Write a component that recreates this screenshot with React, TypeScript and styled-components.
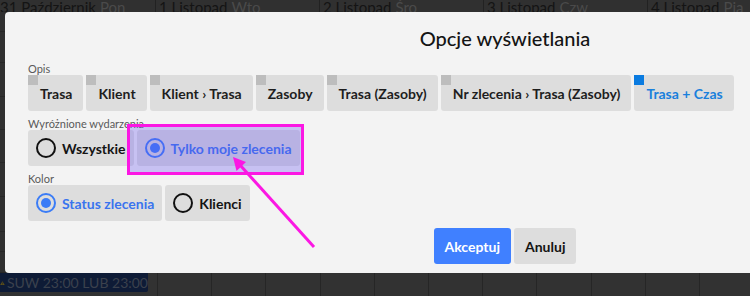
import styled, { createGlobalStyle } from 'styled-components';

const GlobalStyle = createGlobalStyle`
  html, body {
    margin: 0;
    padding: 0;
    width: 750px;
    height: 296px;
    overflow: hidden;
    background: #2f2f2f;
    font-family: Lato, 'Noto Sans', sans-serif;
  }
`;

const Page = styled.div`
  position: relative;
  width: 750px;
  height: 296px;
  overflow: hidden;
  display: flex;
  flex-direction: column;
`;

const DayHeader = styled.div`
  display: grid;
  grid-template-columns: 155px repeat(4, 164px) 1fr;
  height: 12px;
  overflow: hidden;
  background: #303030;
`;

const DayCell = styled.div`
  display: flex;
  align-items: flex-end;
  gap: 4px;
  padding-left: 3px;
  border-left: 1px solid #222;
  font-size: 15px;
  line-height: 14px;
  color: #141414;
  white-space: nowrap;

  &:first-child {
    border-left: none;
    padding-left: 0;
  }

  span {
    color: #4a4a4a;
  }
`;

const Timeline = styled.div`
  height: 261px;
  display: flex;
  flex-direction: column;
`;

const HourLine = styled.div<{ $h: number }>`
  height: ${(p) => p.$h}px;
  border-bottom: 1px solid #262626;
  box-sizing: border-box;
`;

const BottomRow = styled.div`
  flex: 1;
  display: grid;
  grid-template-columns: 157px repeat(11, 54.2px);
  background: #323232;
`;

const SlotCell = styled.div`
  border-left: 1px solid #262626;
  &:first-child {
    border-left: none;
  }
`;

const EventBar = styled.div`
  width: 148px;
  height: 19px;
  display: flex;
  align-items: center;
  gap: 2px;
  background: #0e1b36;
  color: #3b414d;
  font-size: 14px;
  white-space: nowrap;
  overflow: hidden;
  border-radius: 0 0 2px 0;
`;

const Modal = styled.div`
  position: absolute;
  left: 5px;
  top: 12px;
  width: 1000px;
  height: 261px;
  box-sizing: border-box;
  padding: 0 23px;
  background: #f3f3f3;
  border-radius: 4px;
  display: flex;
  flex-direction: column;
`;

const Title = styled.h2`
  margin: 14px 0 0;
  height: 36px;
  text-align: center;
  font-size: 20px;
  line-height: 24px;
  font-weight: 500;
  color: #141414;
`;

const Section = styled.div`
  display: flex;
  flex-direction: column;
  & + & {
    margin-top: 6px;
  }
`;

const Label = styled.div`
  height: 13px;
  font-size: 11px;
  line-height: 13px;
  color: #5a5a5a;
`;

const Row = styled.div`
  display: flex;
  gap: 3px;
`;

const OptionButton = styled.button<{ $active?: boolean }>`
  position: relative;
  height: 36px;
  padding: 0 11px 0 12px;
  border: none;
  border-radius: 3px;
  background: #dddddd;
  font-family: inherit;
  font-size: 14px;
  font-weight: 700;
  color: ${(p) => (p.$active ? '#1a80dc' : '#1e1e1e')};
  cursor: pointer;

  &::before {
    content: '';
    position: absolute;
    left: 0;
    top: 0;
    width: 10px;
    height: 10px;
    background: ${(p) => (p.$active ? '#0a7be0' : '#bdbdbd')};
  }
`;

const RadioButton = styled.button<{ $checked?: boolean }>`
  height: 36px;
  display: flex;
  align-items: center;
  gap: 6px;
  padding: 0 8px;
  border: none;
  border-radius: 3px;
  background: #dddddd;
  font-family: inherit;
  font-size: 14px;
  font-weight: 700;
  color: ${(p) => (p.$checked ? '#3a74ee' : '#141414')};
  cursor: pointer;
`;

const RadioDot = styled.span<{ $checked?: boolean }>`
  width: 20px;
  height: 20px;
  box-sizing: border-box;
  border-radius: 50%;
  border: 2px solid ${(p) => (p.$checked ? '#3b7cf6' : '#111')};
  display: flex;
  align-items: center;
  justify-content: center;

  &::after {
    content: '';
    display: ${(p) => (p.$checked ? 'block' : 'none')};
    width: 10px;
    height: 10px;
    border-radius: 50%;
    background: #3b7cf6;
  }
`;

const Footer = styled.div`
  margin-top: 7px;
  display: flex;
  justify-content: center;
  gap: 3px;
`;

const ActionButton = styled.button<{ $primary?: boolean }>`
  height: 36px;
  padding: 0 11px;
  border: none;
  border-radius: 3px;
  background: ${(p) => (p.$primary ? '#4080ff' : '#dddddd')};
  color: ${(p) => (p.$primary ? '#ffffff' : '#141414')};
  font-family: inherit;
  font-size: 14px;
  font-weight: 700;
  cursor: pointer;
`;

const Highlight = styled.div`
  position: absolute;
  left: 127px;
  top: 124px;
  width: 177px;
  height: 51px;
  box-sizing: border-box;
  border: 3px solid #fb17e3;
  background: rgba(100, 80, 243, 0.3);
  pointer-events: none;
`;

const ArrowLayer = styled.svg`
  position: absolute;
  left: 0;
  top: 0;
  pointer-events: none;
`;

const descOptions = [
  'Trasa',
  'Klient',
  'Klient › Trasa',
  'Zasoby',
  'Trasa (Zasoby)',
  'Nr zlecenia › Trasa (Zasoby)',
  'Trasa + Czas',
];

const days = [
  ['31 Październik', 'Pon'],
  ['1 Listopad', 'Wto'],
  ['2 Listopad', 'Śro'],
  ['3 Listopad', 'Czw'],
  ['4 Listopad', 'Pią'],
  ['', ''],
];

const hourRows = [20, 31, 34, 33, 33, 34, 35, 20, 21];

export default function App() {
  return (
    <>
      <GlobalStyle />
      <Page>
        <DayHeader>
          {days.map(([d, w], i) => (
            <DayCell key={i}>
              {d} <span>{w}</span>
            </DayCell>
          ))}
        </DayHeader>
        <Timeline>
          {hourRows.map((h, i) => (
            <HourLine key={i} $h={h} />
          ))}
        </Timeline>
        <BottomRow>
          <SlotCell>
            <EventBar>
              <svg width="16" height="14" viewBox="0 0 16 14">
                <path d="M8 1 L15.5 13.5 H0.5 Z" fill="#5e5018" />
                <rect x="7.2" y="5" width="1.6" height="5" fill="#0e1b36" />
                <rect x="7.2" y="11" width="1.6" height="1.6" fill="#0e1b36" />
              </svg>
              SUW 23:00 LUB 23:00
            </EventBar>
          </SlotCell>
          {Array.from({ length: 11 }).map((_, i) => (
            <SlotCell key={i} />
          ))}
        </BottomRow>

        <Modal>
          <Title>Opcje wyświetlania</Title>
          <Section>
            <Label>Opis</Label>
            <Row>
              {descOptions.map((o) => (
                <OptionButton key={o} $active={o === 'Trasa + Czas'}>
                  {o}
                </OptionButton>
              ))}
            </Row>
          </Section>
          <Section>
            <Label>Wyróżnione wydarzenia</Label>
            <Row>
              <RadioButton>
                <RadioDot />
                Wszystkie
              </RadioButton>
              <RadioButton $checked>
                <RadioDot $checked />
                Tylko moje zlecenia
              </RadioButton>
            </Row>
          </Section>
          <Section>
            <Label>Kolor</Label>
            <Row>
              <RadioButton $checked>
                <RadioDot $checked />
                Status zlecenia
              </RadioButton>
              <RadioButton>
                <RadioDot />
                Klienci
              </RadioButton>
            </Row>
          </Section>
          <Footer>
            <ActionButton $primary>Akceptuj</ActionButton>
            <ActionButton>Anuluj</ActionButton>
          </Footer>
        </Modal>

        <Highlight />
        <ArrowLayer width="750" height="296" viewBox="0 0 750 296">
          <line x1="314" y1="247" x2="240" y2="165" stroke="#fb17e3" strokeWidth="3" />
          <polygon points="233,157 246,162 236.5,171" fill="#fb17e3" />
        </ArrowLayer>
      </Page>
    </>
  );
}
